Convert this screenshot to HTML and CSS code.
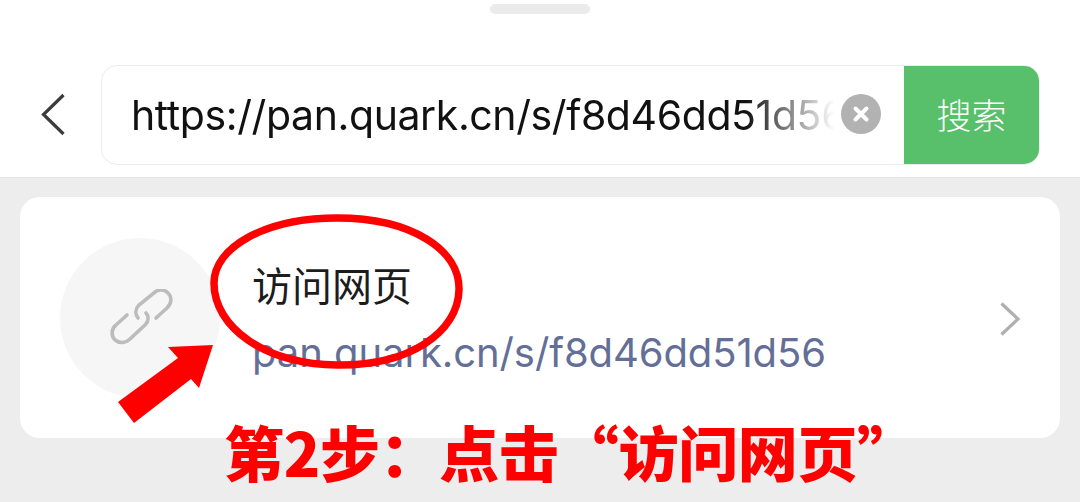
FILE: index.html
```html
<!DOCTYPE html>
<html lang="zh-CN">
<head>
<meta charset="utf-8">
<title>访问网页</title>
<link rel="stylesheet" href="styles.css">
</head>
<body>
<div class="screen">
  <header class="top">
    <div class="handle"></div>
    <div class="search-row">
      <svg class="back" viewBox="0 0 26 44" width="26" height="44"><path d="M23.500 2 3.500 21.500 23.500 41" fill="none" stroke="#3c3c3c" stroke-width="3.200"/></svg>
      <div class="search">
        <div class="field">
          <div class="url">https://pan.quark.cn/s/f8d46dd51d56</div>
          <svg class="clear" viewBox="0 0 40 40" width="40" height="40"><circle cx="20" cy="20" r="20" fill="#b2b2b2"/><path d="M14.500 14.500l11 11M25.500 14.500l-11 11" stroke="#fff" stroke-width="4" stroke-linecap="round"/></svg>
        </div>
        <div class="go">搜索</div>
      </div>
    </div>
  </header>
  <main class="body">
    <section class="card">
      <div class="avatar">
        <svg viewBox="0 0 64 64" width="64" height="64"><g fill="none" stroke="#bcbcbc" stroke-width="3.600" stroke-linecap="round"><path d="M46 29 57 19c5-5 5-11 1-15-4-4-10-4-14 0L29 16c-4 4-4 9-1 13"/><path d="M36 24c3 3 3 8-1 12L20 50c-4 4-10 5-15 1-4-4-4-11 1-15l11-10"/></g></svg>
      </div>
      <div class="info">
        <div class="title">访问网页</div>
        <div class="link">pan.quark.cn/s/f8d46dd51d56</div>
      </div>
      <svg class="more" viewBox="0 0 22 36" width="22" height="36"><path d="M2.500 2.500 19 18 2.500 33.500" fill="none" stroke="#b0b0b0" stroke-width="3.200"/></svg>
    </section>
  </main>
  <svg class="mark" viewBox="0 0 1080 502" width="1080" height="502">
    <path d="M214 283C214 248 264 218 337 218 412 218 460 250 459 290 458 332 410 366 337 365 264 364 214 327 214 283Z" fill="none" stroke="#fe0000" stroke-width="7.500"/>
    <path d="M118 402 178 358 168 347 213 345 199 388 191 379 134 423Z" fill="#fe0000"/>
  </svg>
  <div class="caption">第2步：点击“访问网页”</div>
</div>
</body>
</html>
```
FILE: styles.css
```css
* { box-sizing: border-box; }
html, body { margin: 0; padding: 0; }
body { width: 1080px; height: 502px; overflow: hidden; background: #ededed; font-family: "Inter", "Noto Sans CJK SC", sans-serif; }
.screen { position: relative; width: 1080px; height: 502px; overflow: hidden; }
.top { height: 178px; background: #fff; border-bottom: 1px solid #e4e4e4; padding-top: 4px; }
.handle { width: 100px; height: 10px; margin: 0 auto; border-radius: 5px; background: #ebebeb; }
.search-row { display: flex; align-items: center; margin-top: 51px; padding: 0 40px; gap: 35px; }
.back { flex: none; }
.search { flex: 1; height: 100px; display: flex; border: 1px solid #ececec; border-radius: 16px; overflow: hidden; background: #fff; }
.field { flex: 1; display: flex; align-items: center; padding: 0 23px 0 29px; min-width: 0; gap: 3px; }
.url { flex: 1; min-width: 0; overflow: hidden; white-space: nowrap; font-size: 41px; line-height: 50px; letter-spacing: -0.4px; color: #111; -webkit-mask-image: linear-gradient(to right, #000 87%, transparent 99.500%); mask-image: linear-gradient(to right, #000 87%, transparent 99.500%); }
.clear { flex: none; margin-top: -2px; }
.go { flex: none; width: 135px; padding-bottom: 4px; display: flex; align-items: center; justify-content: center; background: #58bf6b; color: #fff; font-size: 35px; font-family: "Noto Sans CJK SC", sans-serif; font-weight: 300; }
.body { padding: 19px 20px 0; }
.card { height: 241px; background: #fff; border-radius: 20px; display: flex; align-items: center; padding: 0 40px; }
.avatar { flex: none; width: 160px; height: 160px; border-radius: 50%; background: #f6f6f6; display: flex; align-items: center; justify-content: center; padding: 6px 0 0 3px; }
.info { flex: 1; margin-left: 32px; }
.title { font-size: 40px; line-height: 50px; color: #1c1c1c; font-family: "Noto Sans CJK SC", sans-serif; font-weight: 400; }
.link { margin-top: 21px; font-size: 40px; line-height: 46px; letter-spacing: -0.1px; color: #646f97; }
.more { flex: none; margin-top: 2px; margin-right: -1px; }
.mark { position: absolute; left: 0; top: 0; }
.caption { position: absolute; left: 224px; top: 415px; white-space: nowrap; font-family: "Noto Sans CJK SC", sans-serif; font-weight: 900; font-size: 60px; line-height: 72px; letter-spacing: -0.3px; color: #fe0000; }
```
